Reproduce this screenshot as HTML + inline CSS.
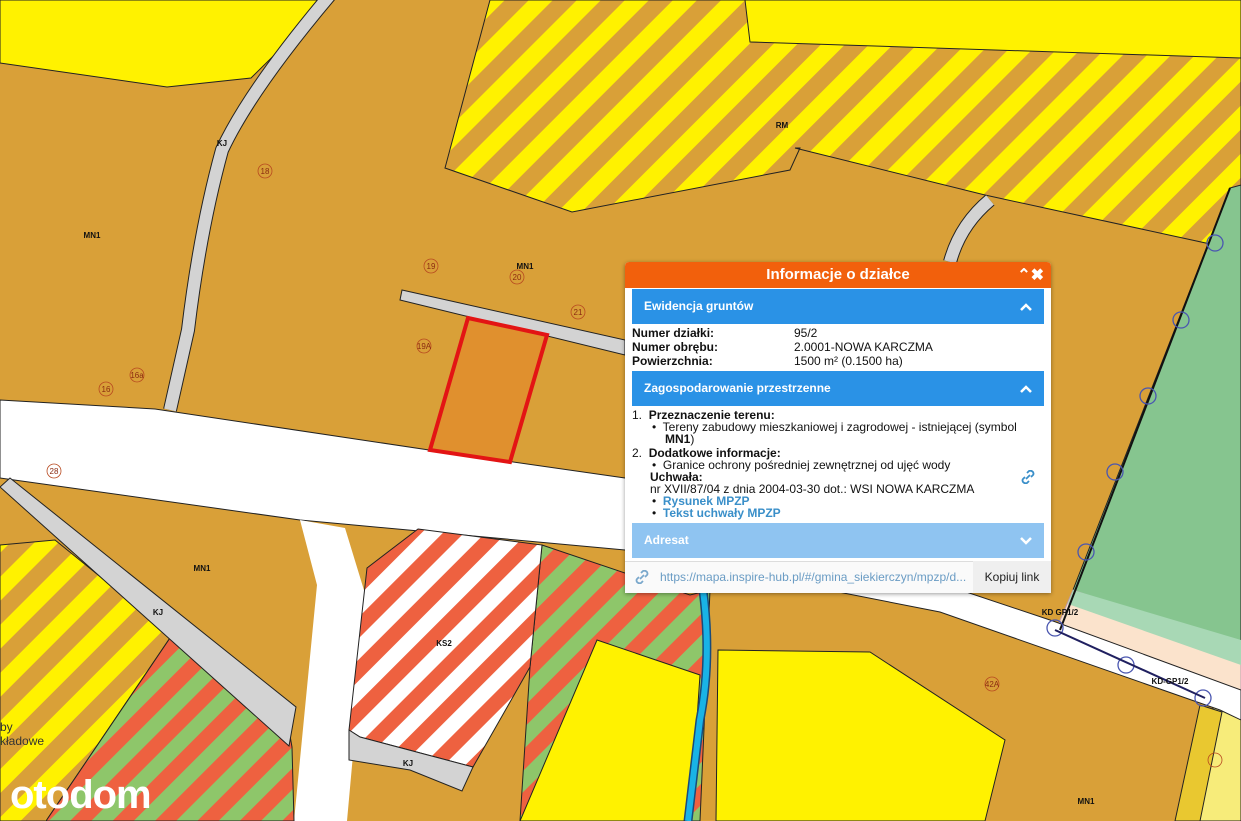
<!DOCTYPE html>
<html><head><meta charset="utf-8"><style>
*{margin:0;padding:0;box-sizing:border-box}
body{width:1241px;height:821px;overflow:hidden;position:relative;background:#D9A038;font-family:"Liberation Sans",sans-serif}
svg{position:absolute;left:0;top:0}
.pop{position:absolute;left:625px;top:262px;width:426px;height:331px;background:#fff;box-shadow:0 1px 4px rgba(0,0,0,.4);border-radius:4px 4px 0 0;overflow:hidden}
.hd{height:26px;background:#F2600C;color:#fff;font-weight:bold;font-size:15px;text-align:center;line-height:25px;position:relative}
.hd span{position:absolute;right:7px;top:1px;font-size:16px;font-weight:bold}
.bar{position:absolute;left:7px;width:412px;height:35px;background:#2A92E6;color:#fff;font-weight:bold;font-size:12px;line-height:35px;padding-left:12px}
.bar svg{position:absolute;right:12px;top:14px;left:auto}
.t{position:absolute;font-size:12px;color:#111;line-height:12px;white-space:nowrap}
b{font-weight:bold}
.lk{color:#3A8FC9;font-weight:bold}
.lbl{font-size:8px;font-weight:bold;fill:#111}
</style></head><body>
<svg width="1241" height="821" viewBox="0 0 1241 821">
<defs>
<pattern id="yb" patternUnits="userSpaceOnUse" width="34" height="34" patternTransform="rotate(45)"><rect width="34" height="34" fill="#D9A038"/><rect width="17" height="34" fill="#FFF200"/></pattern>
<pattern id="rw" patternUnits="userSpaceOnUse" width="30" height="30" patternTransform="rotate(45)"><rect width="30" height="30" fill="#fff"/><rect width="15" height="30" fill="#EE6140"/></pattern>
<pattern id="rg" patternUnits="userSpaceOnUse" width="30" height="30" patternTransform="rotate(45)"><rect width="30" height="30" fill="#8EC66A"/><rect width="15" height="30" fill="#EE6140"/></pattern>
</defs>
<g stroke="#222" stroke-width="1">
<polygon points="0,0 330,0 251,78 167,87 0,63" fill="#FFF200"/>
<polygon points="740,0 1241,0 1241,60 745,42" fill="#FFF200"/>
<polygon points="490,0 745,0 750,42 1241,58 1241,200 1215,245 985,195 795,148 800,148 790,170 572,212 445,168" fill="url(#yb)"/>
<polygon points="1230,188 1241,185 1241,659 1073,590" fill="#86C58F"/>
<polygon points="1073,590 1241,650 1241,705 1055,632" fill="#FBE3CC" stroke="#b9a"/>
<polygon points="1073,590 1241,640 1241,665 1068,604" fill="#A8D8B5" stroke="none"/>
<polygon points="1215,700 1241,700 1241,821 1185,821" fill="#F7EC7A"/>
<polygon points="1200,705 1222,712 1200,821 1175,821" fill="#E9C830"/>
<path d="M0,400 L155,409 L429,450 L625,478 L1053,621 L1241,690 L1241,720 L1220,710 L940,612 L625,550 L300,520 L0,478 Z" fill="#fff"/>
<polygon points="317,585 300,520 345,528 367,600 347,821 294,821" fill="#fff" stroke="none"/>
<polygon points="0,545 55,540 172,635 46,821 0,821" fill="url(#yb)"/>
<polygon points="172,635 285,707 292,747 294,821 46,821" fill="url(#rg)"/>
<polygon points="542,545 690,595 710,590 700,821 520,821 530,667" fill="url(#rg)"/>
<polygon points="418,529 542,545 530,667 473,767 360,737 349,730 367,568" fill="url(#rw)"/>
<polygon points="349,730 360,737 473,767 462,791 410,770 349,760" fill="#D3D3D3"/>
<polygon points="597,640 700,675 690,821 520,821" fill="#FFF200"/>
<polygon points="718,650 870,652 1005,740 985,821 716,821" fill="#FFF200"/>
<path d="M0,487 L10,478 L296,707 L289,746 Z" fill="#D3D3D3"/>
<polygon points="402,290 625,340 625,355 400,300" fill="#D3D3D3"/>
</g>
<path d="M330,-5 Q250,90 222,150 Q200,230 188,330 L170,410" fill="none" stroke="#222" stroke-width="14"/>
<path d="M330,-5 Q250,90 222,150 Q200,230 188,330 L170,410" fill="none" stroke="#D3D3D3" stroke-width="12"/>
<path d="M990,200 Q960,225 950,262" fill="none" stroke="#222" stroke-width="14"/>
<path d="M990,200 Q960,225 950,262" fill="none" stroke="#D3D3D3" stroke-width="12"/>
<path d="M703,590 Q712,660 700,720 L688,821" fill="none" stroke="#1a4b7a" stroke-width="9"/>
<path d="M703,590 Q712,660 700,720 L688,821" fill="none" stroke="#19B3E6" stroke-width="6"/>
<path d="M1060,630 L1230,188" stroke="#111" stroke-width="2"/>
<g fill="none" stroke="#4a56b0" stroke-width="1.3">
<circle cx="1215" cy="243" r="8"/><circle cx="1181" cy="320" r="8"/><circle cx="1148" cy="396" r="8"/><circle cx="1115" cy="472" r="8"/><circle cx="1086" cy="552" r="8"/><circle cx="1055" cy="628" r="8"/><circle cx="1126" cy="665" r="8"/><circle cx="1203" cy="698" r="8"/></g>
<path d="M1055,630 L1205,698" stroke="#202060" stroke-width="2"/>
<polygon points="468,318 547,335 510,462 430,450" fill="#E0902E" stroke="#E31414" stroke-width="4"/>
<g fill="none" stroke="#b84a20" stroke-width="0.8">
<circle cx="265" cy="171" r="7"/><circle cx="431" cy="266" r="7"/><circle cx="517" cy="277" r="7"/><circle cx="578" cy="312" r="7"/><circle cx="424" cy="346" r="7"/><circle cx="137" cy="375" r="7"/><circle cx="106" cy="389" r="7"/><circle cx="54" cy="471" r="7"/><circle cx="992" cy="684" r="7"/><circle cx="1215" cy="760" r="7"/></g>
<g font-family="Liberation Sans" font-size="8" fill="#8a2a10" text-anchor="middle">
<text x="265" y="174">18</text><text x="431" y="269">19</text><text x="517" y="280">20</text><text x="578" y="315">21</text><text x="424" y="349">19A</text><text x="137" y="378">16a</text><text x="106" y="392">16</text><text x="54" y="474">28</text><text x="992" y="687">42A</text></g>
<g font-family="Liberation Sans" class="lbl" text-anchor="middle">
<text x="92" y="238" class="lbl">MN1</text><text x="525" y="269" class="lbl">MN1</text><text x="782" y="128" class="lbl">RM</text><text x="202" y="571" class="lbl">MN1</text><text x="444" y="646" class="lbl">KS2</text><text x="1086" y="804" class="lbl">MN1</text><text x="222" y="146" class="lbl">KJ</text><text x="158" y="615" class="lbl">KJ</text><text x="408" y="766" class="lbl">KJ</text><text x="1060" y="615" class="lbl" fill="#555">KD GP1/2</text><text x="1170" y="684" class="lbl" fill="#555">KD-GP1/2</text></g>
<text x="0" y="731" font-family="Liberation Sans" font-size="12" fill="#333">by</text>
<text x="0" y="745" font-family="Liberation Sans" font-size="12" fill="#333">kładowe</text>
<text x="10" y="808" font-family="Liberation Sans" font-size="40" font-weight="bold" fill="#fff" letter-spacing="-1">otodom</text>
</svg>
<div class="pop">
<div class="hd">Informacje o działce<span>⌃✖</span></div>
<div class="bar" style="top:27px">Ewidencja gruntów<svg width="12" height="8" viewBox="0 0 12 8"><path d="M1,7 L6,2 L11,7" fill="none" stroke="#fff" stroke-width="2.5"/></svg></div>
<div class="t" style="left:7px;top:65px"><b>Numer działki:</b></div><div class="t" style="left:169px;top:65px">95/2</div>
<div class="t" style="left:7px;top:79px"><b>Numer obrębu:</b></div><div class="t" style="left:169px;top:79px">2.0001-NOWA KARCZMA</div>
<div class="t" style="left:7px;top:93px"><b>Powierzchnia:</b></div><div class="t" style="left:169px;top:93px">1500 m² (0.1500 ha)</div>
<div class="bar" style="top:109px">Zagospodarowanie przestrzenne<svg width="12" height="8" viewBox="0 0 12 8"><path d="M1,7 L6,2 L11,7" fill="none" stroke="#fff" stroke-width="2.5"/></svg></div>
<div class="t" style="left:7px;top:147px">1.&nbsp; <b>Przeznaczenie terenu:</b></div>
<div class="t" style="left:27px;top:159px">•&nbsp; Tereny zabudowy mieszkaniowej i zagrodowej - istniejącej (symbol</div>
<div class="t" style="left:40px;top:171px"><b>MN1</b>)</div>
<div class="t" style="left:7px;top:185px">2.&nbsp; <b>Dodatkowe informacje:</b></div>
<div class="t" style="left:27px;top:197px">•&nbsp; Granice ochrony pośredniej zewnętrznej od ujęć wody</div>
<div class="t" style="left:25px;top:209px"><b>Uchwała:</b></div>
<div class="t" style="left:25px;top:221px">nr XVII/87/04 z dnia 2004-03-30 dot.: WSI NOWA KARCZMA</div>
<div class="t" style="left:27px;top:233px">•&nbsp; <span class="lk">Rysunek MPZP</span></div>
<div class="t" style="left:27px;top:245px">•&nbsp; <span class="lk">Tekst uchwały MPZP</span></div>
<svg style="left:396px;top:208px" width="14" height="14" viewBox="0 0 14 14"><g fill="none" stroke="#3A8FC9" stroke-width="1.8"><path d="M6,3 L8,1 Q10,0 12,2 Q13,4 12,5 L10,7"/><path d="M8,11 L6,13 Q4,14 2,12 Q1,10 2,9 L4,7"/><path d="M5,9 L9,5"/></g></svg>
<div class="bar" style="top:261px;background:#8FC4F1">Adresat<svg width="12" height="8" viewBox="0 0 12 8"><path d="M1,1 L6,6 L11,1" fill="none" stroke="#fff" stroke-width="2.5"/></svg></div>
<div style="position:absolute;left:0;top:299px;width:426px;height:32px;background:#fafafa;border-top:1px solid #ddd"></div>
<svg style="left:10px;top:308px" width="14" height="14" viewBox="0 0 14 14"><g fill="none" stroke="#7AA8CC" stroke-width="1.8"><path d="M6,3 L8,1 Q10,0 12,2 Q13,4 12,5 L10,7"/><path d="M8,11 L6,13 Q4,14 2,12 Q1,10 2,9 L4,7"/><path d="M5,9 L9,5"/></g></svg>
<div class="t" style="left:35px;top:309px;color:#6A9CC4">https://mapa.inspire-hub.pl/#/gmina_siekierczyn/mpzp/d...</div>
<div style="position:absolute;left:348px;top:299px;width:78px;height:32px;background:#EFEFEF;font-size:12px;line-height:32px;text-align:center;color:#222">Kopiuj link</div>
</div>
</body></html>
